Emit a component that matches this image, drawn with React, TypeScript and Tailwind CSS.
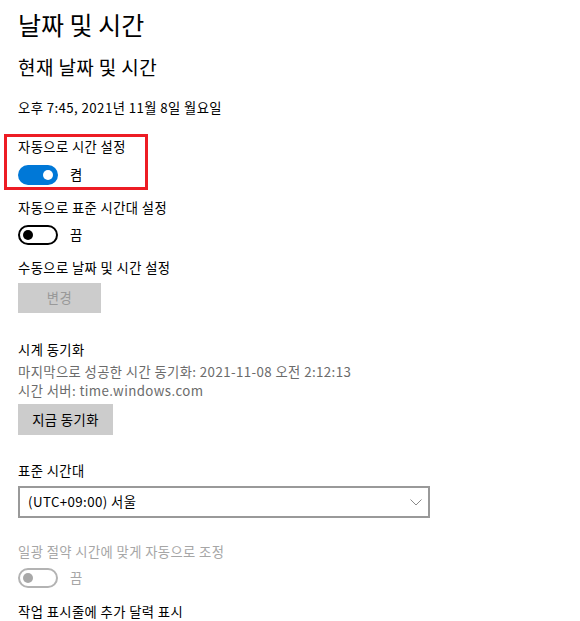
const font = { fontFamily: '"Noto Sans CJK KR", "Noto Sans", sans-serif' }

function Toggle({ on, disabled }: { on?: boolean; disabled?: boolean }) {
  if (on) {
    return (
      <div className="w-[40px] h-[20px] rounded-full bg-[#0078d7] flex items-center justify-end pr-[5px]">
        <div className="w-[10px] h-[10px] rounded-full bg-white" />
      </div>
    )
  }
  return (
    <div
      className={`w-[40px] h-[20px] rounded-full border-2 flex items-center pl-[3px] ${
        disabled ? 'border-[#b3b3b3]' : 'border-black'
      }`}
    >
      <div className={`w-[10px] h-[10px] rounded-full ${disabled ? 'bg-[#a8a8a8]' : 'bg-black'}`} />
    </div>
  )
}

function ToggleRow({ on, disabled, label }: { on?: boolean; disabled?: boolean; label: string }) {
  return (
    <div className="flex items-center gap-[12px] h-[20px]">
      <Toggle on={on} disabled={disabled} />
      <span className={`text-[13.3px] tracking-[0.4px] ${disabled ? 'text-[#a6a6a6]' : 'text-black'}`}>{label}</span>
    </div>
  )
}

export default function App() {
  return (
    <div className="w-[580px] h-[621px] overflow-hidden bg-white text-black px-[18px]" style={font}>
      {/* 제목 */}
      <h1 className="mt-[8px] text-[25px] leading-[32px] font-normal">날짜 및 시간</h1>
      <h2 className="mt-[15px] text-[19px] leading-[24px] font-normal tracking-[0.4px]">현재 날짜 및 시간</h2>
      <p className="mt-[19px] text-[13.3px] leading-[20px] tracking-[0.4px]">오후 7:45, 2021년 11월 8일 월요일</p>

      {/* 자동 시간 설정 (강조 박스) */}
      <div className="mt-[16px] -ml-[14px] w-[144px] h-[56px] border-[3px] border-[#ed1c24] pl-[11px]">
        <p className="text-[13.3px] leading-[20px] tracking-[0.4px]">자동으로 시간 설정</p>
        <div className="mt-[8px]">
          <ToggleRow on label="켬" />
        </div>
      </div>

      <p className="mt-[8px] text-[13.3px] leading-[20px] tracking-[0.4px]">자동으로 표준 시간대 설정</p>
      <div className="mt-[7px]">
        <ToggleRow label="끔" />
      </div>

      <p className="mt-[13px] text-[13.3px] leading-[20px] tracking-[0.4px]">수동으로 날짜 및 시간 설정</p>
      <button className="mt-[5px] w-[83px] h-[30px] bg-[#cccccc] text-[#999999] text-[13.3px] tracking-[0.4px] block">
        변경
      </button>

      {/* 시계 동기화 */}
      <p className="mt-[27px] text-[13.3px] leading-[20px] tracking-[0.4px]">시계 동기화</p>
      <div className="mt-[2px] text-[13.3px] leading-[19px] tracking-[0.4px] text-[#6b6b6b]">
        <p>마지막으로 성공한 시간 동기화: 2021-11-08 오전 2:12:13</p>
        <p>시간 서버: time.windows.com</p>
      </div>
      <button className="mt-[4px] w-[95px] h-[31px] bg-[#cccccc] text-black text-[13.3px] tracking-[0.4px] block">
        지금 동기화
      </button>

      {/* 표준 시간대 */}
      <p className="mt-[26px] text-[13.3px] leading-[20px] tracking-[0.4px]">표준 시간대</p>
      <div className="mt-[5px] w-[412px] h-[32px] border-2 border-[#999999] flex items-center justify-between pl-[8px] pr-[6px]">
        <span className="text-[13.3px] tracking-[0.4px]">(UTC+09:00) 서울</span>
        <svg width="12" height="7" viewBox="0 0 12 7" fill="none">
          <polyline points="0.5,0.5 6,6 11.5,0.5" stroke="#8a8a8a" strokeWidth="1" />
        </svg>
      </div>

      <p className="mt-[24px] text-[13.3px] leading-[20px] tracking-[0.4px] text-[#a6a6a6]">일광 절약 시간에 맞게 자동으로 조정</p>
      <div className="mt-[6px]">
        <ToggleRow disabled label="끔" />
      </div>

      <p className="mt-[14px] text-[13.3px] leading-[20px] tracking-[0.4px]">작업 표시줄에 추가 달력 표시</p>
    </div>
  )
}
